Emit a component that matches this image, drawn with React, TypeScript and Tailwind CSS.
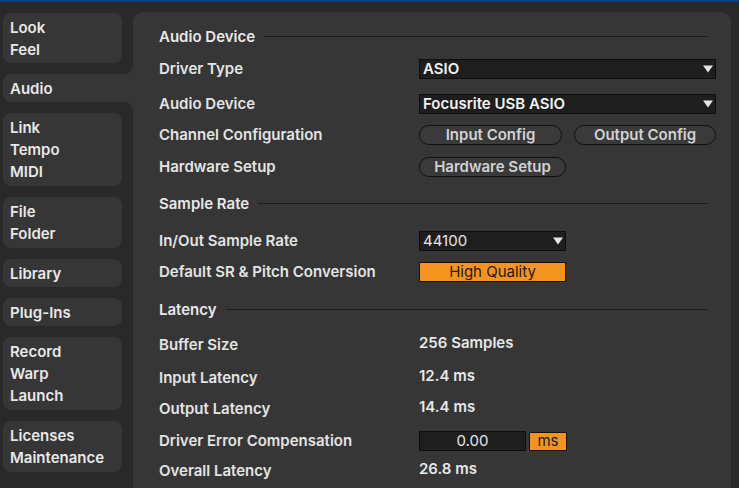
import React from 'react';

// left side tabs, each group is one rounded block
const tabs: { items: string[]; pb: string }[] = [
    { items: ['Look', 'Feel'], pb: 'pb-[2px]' },
    { items: ['Audio'], pb: 'pb-[2px]' },
    { items: ['Link', 'Tempo', 'MIDI'], pb: 'pb-[3px]' },
    { items: ['File', 'Folder'], pb: 'pb-[3px]' },
    { items: ['Library'], pb: 'pb-[2px]' },
    { items: ['Plug-Ins'], pb: 'pb-[2px]' },
    { items: ['Record', 'Warp', 'Launch'], pb: 'pb-[3px]' },
    { items: ['Licenses', 'Maintenance'], pb: 'pb-[3px]' },
];

function Triangle() {
    return (
        <svg width="10" height="8" viewBox="0 0 10 8" className="shrink-0">
            <path d="M0 0.5h10L5 7.5z" fill="#e6e6e6" />
        </svg>
    );
}

function Heading({ title, className }: { title: string; className?: string }) {
    return (
        <div className={`flex items-center h-[20px] gap-[9px] pr-[24px] ${className ?? ''}`}>
            <span className="font-semibold text-[#e8e8e8]">{title}</span>
            <div className="flex-1 h-px bg-[#1b1b1b] mt-[-1px]" />
        </div>
    );
}

function Row({ label, className, children }: { label: string; className?: string; children?: React.ReactNode }) {
    return (
        <div className={`flex items-center h-[20px] ${className ?? ''}`}>
            <span className="w-[260px] shrink-0 font-semibold text-[#e4e4e4]">{label}</span>
            {children}
        </div>
    );
}

function Dropdown({ value, width, bold = true }: { value: string; width: string; bold?: boolean }) {
    return (
        <div className={`${width} h-[20px] flex items-center justify-between bg-[#1e1e1e] border border-[#0e0e0e] pl-[3px] pr-[2px]`}>
            <span className={`${bold ? 'font-semibold text-[#f2f2f2]' : 'text-[#e6e6e6]'}`}>{value}</span>
            <Triangle />
        </div>
    );
}

function PillButton({ label, width }: { label: string; width: string }) {
    return (
        <div className={`${width} h-[20px] flex items-center justify-center rounded-full border border-[#101010] bg-[#3a3a3a] font-semibold text-[#d2d2d2]`}>
            {label}
        </div>
    );
}

export default function App() {
    return (
        <div className="w-[739px] h-[488px] overflow-hidden bg-[#292929] text-[15px] leading-[22px] font-['Inter',sans-serif]">
            <div className="h-[2px] bg-[#0d3d78]" />
            <div className="flex pt-[10px]">
                {/* tabs */}
                <div className="w-[133px] shrink-0 flex flex-col gap-[11px] pt-[1px] pl-[3px]">
                    {tabs.map((group, index) => {
                        const active = group.items[0] === 'Audio';
                        return (
                            <div
                                key={index}
                                className={`relative pt-[4px] ${group.pb} pl-[7px] font-semibold text-[#e8e8e8] bg-[#363636] ${active ? 'w-[130px] rounded-l-[8px]' : 'w-[119px] rounded-[8px]'}`}
                            >
                                {group.items.map(item => <div key={item}>{item}</div>)}
                                {active && (
                                    <>
                                        <div className="absolute right-0 -top-[9px] w-[9px] h-[9px] bg-[#363636]">
                                            <div className="w-full h-full bg-[#292929] rounded-br-[9px]" />
                                        </div>
                                        <div className="absolute right-0 -bottom-[9px] w-[9px] h-[9px] bg-[#363636]">
                                            <div className="w-full h-full bg-[#292929] rounded-tr-[9px]" />
                                        </div>
                                    </>
                                )}
                            </div>
                        );
                    })}
                </div>

                {/* main panel */}
                <div className="w-[598px] h-[600px] shrink-0 bg-[#363636] rounded-t-[10px] pt-[15px] pl-[26px]">
                    <Heading title="Audio Device" />
                    <Row label="Driver Type" className="mt-[12px]">
                        <Dropdown value="ASIO" width="w-[297px]" />
                    </Row>
                    <Row label="Audio Device" className="mt-[15px]">
                        <Dropdown value="Focusrite USB ASIO" width="w-[297px]" />
                    </Row>
                    <Row label="Channel Configuration" className="mt-[11px]">
                        <div className="flex gap-[12px]">
                            <PillButton label="Input Config" width="w-[143px]" />
                            <PillButton label="Output Config" width="w-[142px]" />
                        </div>
                    </Row>
                    <Row label="Hardware Setup" className="mt-[12px]">
                        <PillButton label="Hardware Setup" width="w-[147px]" />
                    </Row>

                    <Heading title="Sample Rate" className="mt-[17px]" />
                    <Row label="In/Out Sample Rate" className="mt-[17px]">
                        <Dropdown value="44100" width="w-[147px]" bold={false} />
                    </Row>
                    <Row label="Default SR & Pitch Conversion" className="mt-[11px]">
                        <div className="w-[147px] h-[20px] flex items-center justify-center bg-[#f5931f] border border-[#121212] text-[#1c1c1c]">
                            High Quality
                        </div>
                    </Row>

                    <Heading title="Latency" className="mt-[18px]" />
                    <Row label="Buffer Size" className="mt-[15px]">
                        <span className="font-semibold text-[#e8e8e8] mb-[4px]">256 Samples</span>
                    </Row>
                    <Row label="Input Latency" className="mt-[13px]">
                        <span className="font-semibold text-[#e8e8e8] mb-[4px]">12.4 ms</span>
                    </Row>
                    <Row label="Output Latency" className="mt-[11px]">
                        <span className="font-semibold text-[#e8e8e8] mb-[5px]">14.4 ms</span>
                    </Row>
                    <Row label="Driver Error Compensation" className="mt-[12px]">
                        <div className="flex items-center gap-[3px]">
                            <div className="w-[107px] h-[20px] flex items-center justify-center bg-[#1e1e1e] border border-[#0e0e0e] text-[#e6e6e6]">0.00</div>
                            <div className="w-[38px] h-[19px] flex items-center justify-center bg-[#f5931f] border border-[#121212] text-[#1c1c1c]">ms</div>
                        </div>
                    </Row>
                    <Row label="Overall Latency" className="mt-[10px]">
                        <span className="font-semibold text-[#e8e8e8] mb-[4px]">26.8 ms</span>
                    </Row>
                </div>
            </div>
        </div>
    );
}
